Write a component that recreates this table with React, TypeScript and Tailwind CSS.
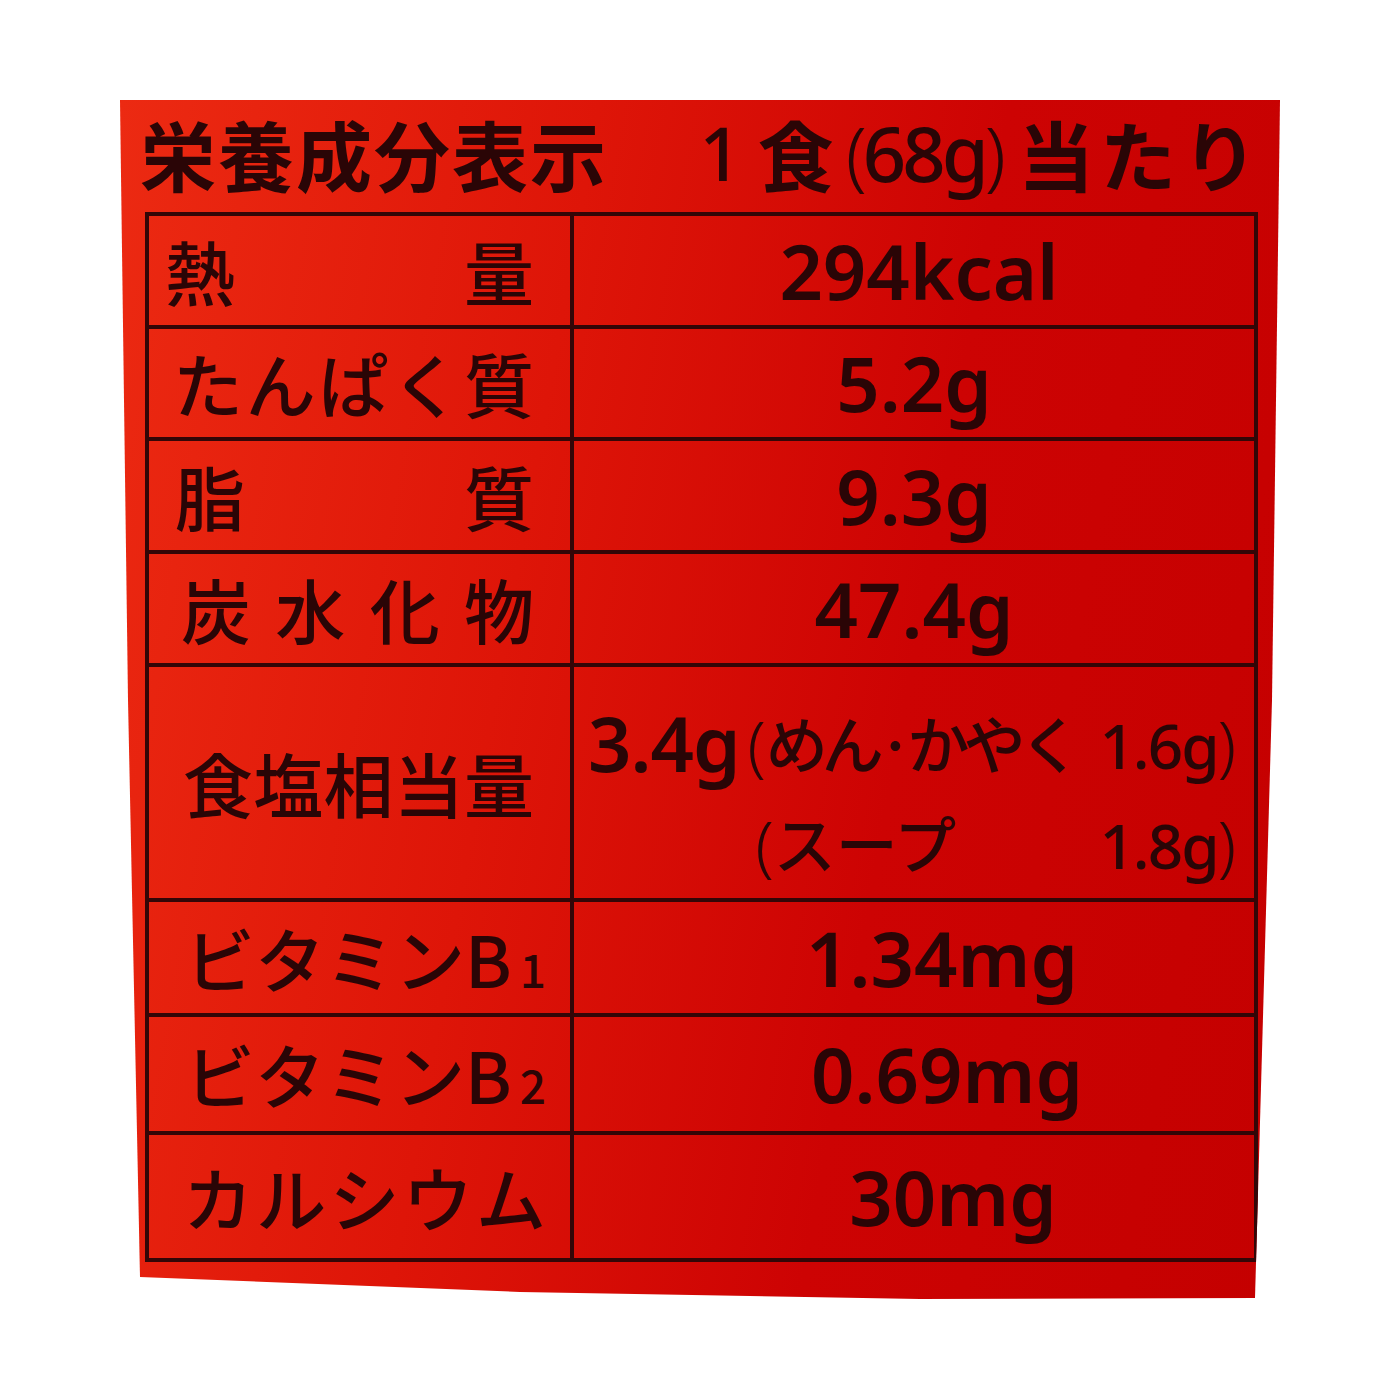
import React from 'react';

type Row = {
  label: React.ReactNode[];
  value: string;
  h: string;
  lp: string;
  vp: string;
};

const sub = (n: string) => (
  <span className="inline-flex items-baseline">
    B<span className="text-[46px] ml-[8px]">{n}</span>
  </span>
);

const rows: Row[] = [
  { label: ['熱', '量'], value: '294kcal', h: 'h-[113px]', lp: 'pl-[16px] pr-[36px]', vp: 'pl-[10px]' },
  { label: ['た', 'ん', 'ぱ', 'く', '質'], value: '5.2g', h: 'h-[112px]', lp: 'pl-[24px] pr-[36px]', vp: '' },
  { label: ['脂', '質'], value: '9.3g', h: 'h-[113px]', lp: 'pl-[26px] pr-[36px]', vp: '' },
  { label: ['炭', '水', '化', '物'], value: '47.4g', h: 'h-[113px]', lp: 'pl-[32px] pr-[36px]', vp: '' },
  { label: ['食', '塩', '相', '当', '量'], value: 'salt', h: 'h-[235px]', lp: 'pl-[34px] pr-[36px]', vp: '' },
  { label: ['ビ', 'タ', 'ミ', 'ン', sub('1')], value: '1.34mg', h: 'h-[115px]', lp: 'pl-[36px] pr-[30px]', vp: 'pl-[56px]' },
  { label: ['ビ', 'タ', 'ミ', 'ン', sub('2')], value: '0.69mg', h: 'h-[118px]', lp: 'pl-[36px] pr-[26px]', vp: 'pl-[66px]' },
  { label: ['カ', 'ル', 'シ', 'ウ', 'ム'], value: '30mg', h: 'h-[123px]', lp: 'pl-[34px] pr-[24px]', vp: 'pl-[78px]' },
];

const SaltValue = () => (
  <div className="flex w-full items-start pl-[14px] pr-[20px] pt-[20px]">
    <span className="text-[76px] leading-[100px] tracking-[-1px]">3.4g</span>
    <div className="flex-1 flex flex-col text-[62px] ml-[8px]">
      <div className="h-[100px] flex items-center justify-between">
        <span>
          <span className="font-['Noto_Sans'] font-light text-[66px]">(</span>
          <span className="font-['Noto_Sans_CJK_JP'] font-medium tracking-[-6px]">めん·かやく</span>
        </span>
        <span className="font-medium tracking-[-2px]">
          1.6g<span className="font-light text-[66px]">)</span>
        </span>
      </div>
      <div className="h-[100px] flex items-center justify-between">
        <span className="ml-[8px]">
          <span className="font-['Noto_Sans'] font-light text-[66px]">(</span>
          <span className="font-['Noto_Sans_CJK_JP'] font-medium">スープ</span>
        </span>
        <span className="font-medium tracking-[-2px]">
          1.8g<span className="font-light text-[66px]">)</span>
        </span>
      </div>
    </div>
  </div>
);

const App = () => {
  return (
    <div className="w-[1400px] h-[1400px] bg-white pt-[100px] pl-[120px] font-['Noto_Sans','Noto_Sans_CJK_JP',sans-serif] text-[#2a0506]">
      <div className="w-[1160px] h-[1200px] px-[20px] bg-[linear-gradient(100deg,#ec2a12_0%,#de1508_35%,#cd0303_65%,#c40000_100%)] [clip-path:polygon(0_0,100%_0,1152px_600px,1135px_1198px,800px_1199px,400px_1192px,20px_1177px,8px_600px)]">
        {/* Title */}
        <div className="h-[112px] flex items-center justify-between pb-[6px]">
          <span className="font-['Noto_Sans_CJK_JP'] font-bold text-[76px] tracking-[2px] leading-none">
            栄養成分表示
          </span>
          <span className="flex items-center font-bold leading-none">
            <span className="font-['Noto_Sans'] font-medium text-[74px]">1</span>
            <span className="font-['Noto_Sans_CJK_JP'] text-[76px] ml-[16px]">食</span>
            <span className="font-['Noto_Sans'] font-medium text-[76px] tracking-[-4px] ml-[12px]">
              <span className="font-light">(</span>68g<span className="font-light">)</span>
            </span>
            <span className="font-['Noto_Sans_CJK_JP'] text-[76px] tracking-[6px] ml-[16px] mr-[-4px]">当たり</span>
          </span>
        </div>

        {/* Table */}
        <div className="ml-[5px] w-[1113px] border-[4px] border-[#330607] flex flex-col">
          {rows.map((row, i) => (
            <div
              key={i}
              className={`flex ${row.h} ${i < rows.length - 1 ? 'border-b-[4px] border-[#330607]' : ''}`}
            >
              <div className={`w-[425px] shrink-0 border-r-[4px] border-[#330607] flex items-center justify-between ${row.lp} font-['Noto_Sans_CJK_JP'] font-medium text-[70px] leading-none`}>
                {row.label.map((c, j) => (
                  <span key={j}>{c}</span>
                ))}
              </div>
              <div className={`flex-1 flex items-center justify-center ${row.vp} font-semibold text-[76px] leading-none`}>
                {row.value === 'salt' ? <SaltValue /> : <span>{row.value}</span>}
              </div>
            </div>
          ))}
        </div>
      </div>
    </div>
  );
};

export default App;
